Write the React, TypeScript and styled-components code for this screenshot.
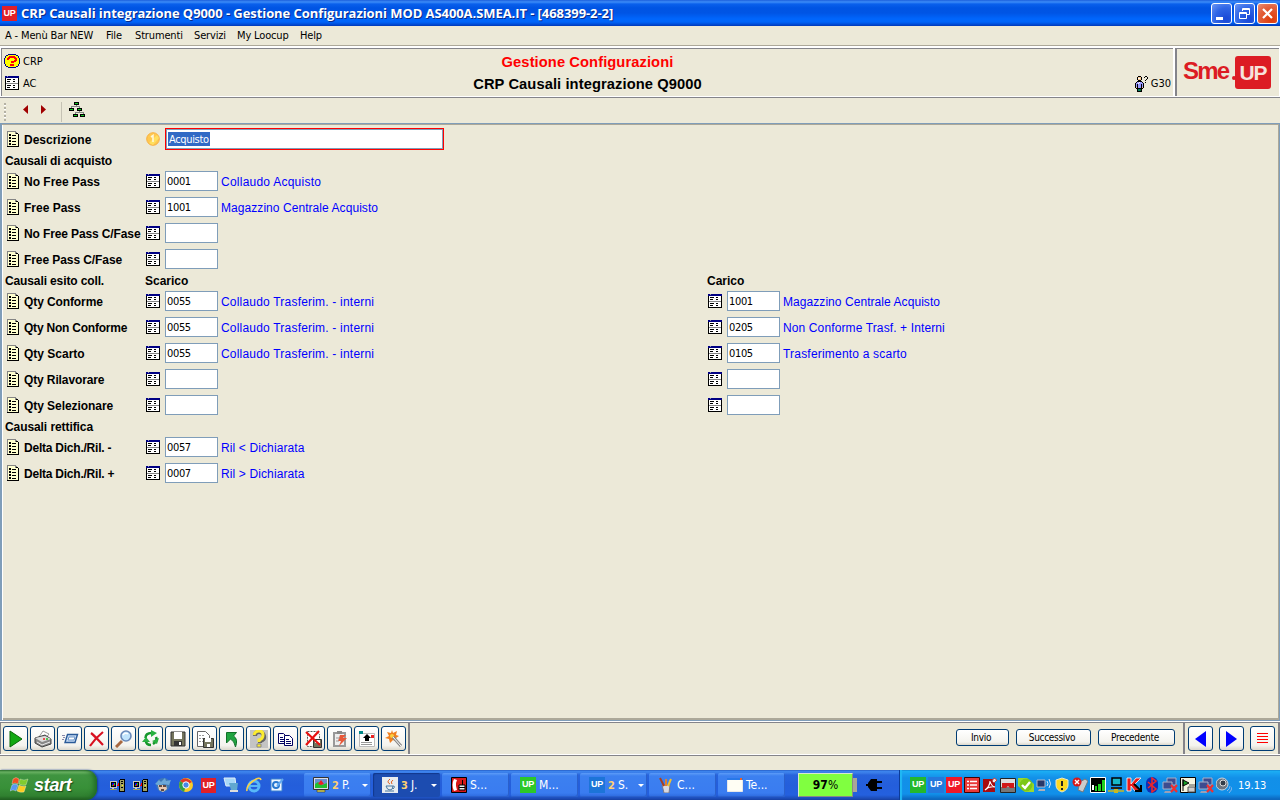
import React from "react";
import styled, { createGlobalStyle, css } from "styled-components";

const ui = `"DejaVu Sans Condensed", "DejaVu Sans", sans-serif`;
const arial = `"Liberation Sans", Arial, sans-serif`;

const Global = createGlobalStyle`
  * { box-sizing: border-box; }
  body { margin: 0; background: #ece9d8; overflow: hidden; }
  svg { display: block; flex: none; }
`;

const Screen = styled.div`
  width: 1280px;
  height: 800px;
  display: flex;
  flex-direction: column;
  background: #ece9d8;
  color: #000;
  font-family: ${ui};
  font-size: 11px;
  white-space: pre;
  cursor: default;
`;

/* ---------- Title bar ---------- */
const TitleBar = styled.header`
  height: 26px;
  flex: none;
  display: flex;
  align-items: center;
  padding: 0 2px;
  background: linear-gradient(#1c5fdc 0, #3c8cf8 2px, #0a60ec 4px, #0054e3 8px, #0055e5 13px, #0066fd 19px, #0064f8 22px, #0050dc 24px, #0038b8 26px);
`;
const WindowTitle = styled.h1`
  flex: 1;
  margin: 0 0 0 4px;
  color: #fff;
  font: bold 13px/26px "Open Sans", sans-serif;
  letter-spacing: -0.07px;
  text-shadow: 1px 1px 0 #0a2a88;
`;
const Caption = styled.span<{ $close?: boolean }>`
  width: 21px;
  height: 21px;
  margin-left: 2px;
  border: 1px solid #fff;
  border-radius: 3px;
  background: ${(p) =>
    p.$close
      ? "radial-gradient(circle at 70% 80%, #e04010 10%, #e2603c 60%, #e89078)"
      : "radial-gradient(circle at 75% 80%, #1c4cd8 10%, #2f66e6 55%, #6e98f4)"};
`;

/* ---------- Menu ---------- */
const MenuBar = styled.nav`
  height: 20px;
  flex: none;
  display: flex;
  border-bottom: 1px solid #aca899;
  line-height: 20px;
`;
const MenuItem = styled.span<{ $w: number }>`
  width: ${(p) => p.$w}px;
  padding-left: 5px;
  letter-spacing: -0.15px;
`;

/* ---------- Header ---------- */
const HeaderRow = styled.section`
  height: 52px;
  flex: none;
  display: flex;
  padding-top: 1px;
  border-bottom: 1px solid #84848a;
  background: #fff;
`;
const InfoPanel = styled.div`
  width: 1172px;
  display: flex;
  margin: 1px 0 1px 1px;
  border: solid #84848a;
  border-width: 1px 0 0 1px;
  background: #ece9d8;
`;
const Codes = styled.div`
  flex: 0 0 200px;
  padding: 1px 0 0 2px;
`;
const Code = styled.div`
  display: flex;
  align-items: center;
  height: 22px;
`;
const CodeIcon = styled.span`
  width: 19px;
  display: flex;
  padding-right: 3px;
  justify-content: center;
`;
const Titles = styled.div`
  flex: 1;
  padding: 2px 0 0 0;
  text-align: center;
  font: bold 14.7px/22px ${arial};
`;
const TitleLine = styled.div<{ $red?: boolean }>`
  color: ${(p) => (p.$red ? "#f00" : "#000")};
  letter-spacing: 0.09px;
`;
const UserBox = styled.div`
  flex: 0 0 200px;
  display: flex;
  justify-content: flex-end;
  align-items: center;
  gap: 3px;
  padding: 22px 2px 0 0;
`;
const LogoPanel = styled.div`
  flex: 1;
  margin: 1px 1px 1px 3px;
  box-shadow: -1px 0 0 #84848a;
  border: solid #84848a;
  border-width: 1px 0 0 1px;
  background: #ece9d8;
  display: flex;
  align-items: center;
  padding-left: 6px;
`;
const LogoText = styled.span`
  font: bold 24px/28px ${arial};
  letter-spacing: -1.8px;
  color: #dc1c24;
  margin-top: -3px;
  width: 49px;
`;
const LogoDot = styled.span`
  width: 4px;
  height: 4px;
  margin: 11px 0 0 0;
  border-radius: 50%;
  background: #dc1c24;
`;
const LogoBox = styled.span`
  width: 36px;
  height: 33px;
  margin: -1px 0 0 -1px;
  border-radius: 3px;
  background: #dc1c24;
  color: #f6e2dc;
  text-align: center;
  font: bold 21px/33px ${arial};
  letter-spacing: -1px;
`;

/* ---------- Navigation strip ---------- */
const NavStrip = styled.div`
  height: 25px;
  flex: none;
  display: flex;
  align-items: center;
`;
const Grip = styled.span`
  width: 2px;
  height: 18px;
  margin: 3px 17px 0 4px;
  background: repeating-linear-gradient(#b4b1a4 0 2px, #fff 2px 3px, transparent 3px 4px);
`;
const Arrows = styled.span`
  margin-top: -2px;
`;
const Divider = styled.span`
  width: 1px;
  height: 20px;
  margin: 2px 7px 0 14px;
  background: #c5c2b4;
`;
const TreeIcon = styled.span`
  margin-top: -2px;
`;

/* ---------- Form ---------- */
const Form = styled.main`
  height: 598px;
  flex: none;
  border: solid #7f9db9;
  border-width: 1px 1px 1px 2px;
  box-shadow: inset 0 1px 0 #aca899, inset 1px 0 0 #fff, inset -1px -2px 0 #aca899;
  padding: 2px 0 0 3px;
`;
const Row = styled.div`
  height: 26px;
  display: flex;
  align-items: center;
`;
const HeadingRow = styled(Row)`
  height: 16px;
`;
const Label = styled.label<{ $w: number; $ls?: number }>`
  width: ${(p) => p.$w}px;
  padding-top: 2px;
  font: bold 12px/16px ${arial};
  letter-spacing: ${(p) => p.$ls ?? 0}px;
  flex: none;
`;
const LabelCell = styled.div`
  width: 141px;
  padding-left: 2px;
  display: flex;
  align-items: center;
  gap: 5px;
  flex: none;
`;
const FieldCell = styled.div`
  width: 562px;
  flex: none;
  display: flex;
  align-items: center;
`;
const Input = styled.div<{ $wide?: boolean }>`
  width: 53px;
  height: 20px;
  margin-left: 5px;
  padding-left: 1px;
  border: 1px solid #7f9db9;
  background: #fff;
  line-height: 20px;
  letter-spacing: -0.35px;
  ${(p) =>
    p.$wide &&
    css`
      width: 279px;
      height: 22px;
      padding-left: 2px;
      border-color: #f00;
      box-shadow: inset -1px -1px 0 #7f9db9, inset 1px 1px 0 #7f9db9;
    `}
`;
const Selection = styled.span`
  display: inline-block;
  height: 14px;
  margin-top: 3px;
  padding-left: 1px;
  line-height: 15px;
  width: 42px;
  background: #316ac5;
  color: #fff;
  vertical-align: top;
`;
const Description = styled.span<{ $ls: number }>`
  margin-left: 3px;
  padding-top: 2px;
  color: #00f;
  font: 12px/16px ${arial};
  letter-spacing: ${(p) => p.$ls}px;
`;

/* ---------- Bottom tool bar ---------- */
const ToolRow = styled.footer`
  height: 35px;
  flex: none;
  display: flex;
  margin-bottom: 14px;
  background: #fff;
  border-bottom: 1px solid #84848a;
  padding: 1px 0 1px;
`;
const ToolPanel = styled.div<{ $w: number; $gap: number; $pad: number }>`
  width: ${(p) => p.$w}px;
  display: flex;
  align-items: center;
  justify-content: flex-end;
  gap: ${(p) => p.$gap}px;
  padding-right: ${(p) => p.$pad}px;
  border: solid #84848a;
  border-width: 1px 0 0 1px;
  margin-right: 1px;
  box-shadow: 2px 0 0 #84848a;
  background: #ece9d8;
`;
const ToolButton = styled.button`
  width: 25px;
  height: 25px;
  flex: none;
  padding: 0;
  border: 1px solid #003c74;
  border-radius: 3px;
  background: linear-gradient(#fff, #f4f3ee 80%, #dcd8cc);
  display: flex;
  align-items: center;
  justify-content: center;
`;
const TextButton = styled(ToolButton)<{ $w: number }>`
  width: ${(p) => p.$w}px;
  height: 17px;
  margin-bottom: 2px;
  padding-right: 3px;
  font: 10px/15px ${ui};
  letter-spacing: -0.3px;
`;

/* ---------- Task bar ---------- */
const TaskBar = styled.div`
  height: 30px;
  flex: none;
  display: flex;
  background: linear-gradient(#1f50b8 0, #3d86ee 1px, #3a7ce8 3px, #2763dc 5px, #245edb 15px, #2460de 25px, #1b48b0 29px, #163ea0);
  color: #fff;
`;
const Start = styled.div`
  width: 97px;
  display: flex;
  align-items: center;
  padding: 0 0 0 10px;
  gap: 5px;
  border-radius: 0 11px 11px 0;
  background: linear-gradient(#2c7030 0, #6cb464 2px, #3f9440 5px, #389038 18px, #308030 26px, #205c20);
  box-shadow: inset -5px 0 5px -2px #1f6a24, 1px 0 2px #173e98;
  font: italic bold 18px/28px ${arial};
  letter-spacing: -0.3px;
  text-shadow: 1px 1px 1px #184a18;
`;
const Launch = styled.div`
  width: 207px;
  padding-left: 12px;
  display: flex;
  align-items: center;
  gap: 7px;
`;
const Tasks = styled.div`
  width: 494px;
  display: flex;
  align-items: center;
  gap: 2px;
`;
const Task = styled.div<{ $active?: boolean }>`
  width: 67px;
  height: 24px;
  display: flex;
  align-items: center;
  padding: 0 3px 0 9px;
  border-radius: 2px;
  background: ${(p) => (p.$active ? "#1c4cb0" : "linear-gradient(#5c9cf8 0, #3c80f0 3px, #3a7cf0 20px, #2c68dc)")};
  box-shadow: ${(p) => (p.$active ? "inset 1px 1px 1px #12388c" : "inset -1px -1px 0 #2a60cc")};
`;
const TaskText = styled.span`
  margin-left: 3px;
  flex: 1;
  font-size: 12px;
  b { color: #ffd070; margin-right: 3px; font-size: 11px; }
`;
const Drop = styled.i`
  border: solid transparent;
  border-width: 3px 3px 0;
  border-top-color: #fff;
`;
const Battery = styled.div`
  width: 55px;
  height: 24px;
  margin: 3px 0 0;
  background: #80ff40;
  border: 1px solid #d8e8d0;
  border-right-color: #888;
  border-bottom-color: #888;
  color: #000;
  text-align: center;
  font: 12px/22px ${ui};
`;
const BatteryCap = styled.div`
  width: 4px;
  height: 14px;
  margin: 8px 9px 0 0;
  background: #aaa698;
`;
const Plug = styled.div`
  display: flex;
  align-items: center;
`;
const Tray = styled.div`
  margin-left: auto;
  width: 381px;
  border-left: 1px solid #0c3c98;
  box-shadow: inset 2px 0 1px #20b8f4;
  padding-left: 10px;
  display: flex;
  align-items: center;
  gap: 2px;
  background: linear-gradient(#0c70c4 0, #1cb0f4 1px, #18a0f0 4px, #1290e8 8px, #1190ea 24px, #0c68c0 29px, #0c58b0);
`;
const Clock = styled.span`
  margin-left: 4px;
  font-size: 11px;
`;
const UpBadge = styled.span<{ $c: string; $s?: number }>`
  width: ${(p) => p.$s ?? 16}px;
  height: ${(p) => p.$s ?? 16}px;
  flex: none;
  background: ${(p) => p.$c};
  color: #fff;
  text-align: center;
  font: bold 9px/14px ${arial};
  letter-spacing: -0.3px;
`;

/* ---------- Pixel drawings ---------- */
const palette: Record<string, string> = {
  k: "#000", g: "#848484", w: "#fff", y: "#ffffce", n: "#000084", b: "#00f", Y: "#ff0", r: "#f00",
  G: "#10c820", p: "#f8c890", l: "#9c9cff", t: "#008060", s: "#c6c6c6", m: "#8890a8", e: "#006c30", a: "#a0a060",
};
const Pixels = ({ rows }: { rows: string[] }) => (
  <svg width={rows[0].length} height={rows.length} shapeRendering="crispEdges">
    {rows.flatMap((r, y) =>
      [...r].map((ch, x) => (ch === "." ? null : <rect key={`${x}-${y}`} x={x} y={y} width="1" height="1" fill={palette[ch]} />))
    )}
  </svg>
);
const listRows = [
  "ggggggggg...", "gyyyyyyygg..", "gyyyyyyygkk.", "gykkyyyyyyyk", "gykkykkkkyyk", "gyyyyyyyyyyk", "gykkyyyyyyyk", "gykkykkkkyyk",
  "gyyyyyyyyyyk", "gykkyyyyyyyk", "gykkykkkkyyk", "gyyyyyyyyyyk", "gykkyyyyyyyk", "gykkykkkkyyk", "gyyyyyyyyyyk", "kkkkkkkkkkkk",
];
const tableRows = [
  "nnmnnnnnnnnnnn", "nnnnnnnnnnnnnn", "kwwwwwwwwwwwwk", "kwkkkkwwkkwwwk", "kwwwwwwwwwwwwk", "kwkkkwwwkkwwwk", "kwwwwwwwwwwwwk",
  "kggggggggggggk", "kwwwwwwwwwwwwk", "kwkkkkwwkkwwwk", "kwwwwwwwwwwwwk", "kwkkkwwwkkwwwk", "kwwwwwwwwwwwwk", "kkkkkkkkkkkkkk",
];
const questionRows = [
  "....nnnnnnnn....", "..nnYYYYYYYYnn..", ".nYYYrrrrrrYYYn.", ".nYYrrrrrrrrYYn.", "nYYrrrYYYYrrrYYn", "nYYrrYYYYYYrrYYn", "nYYYYYYYYYrrrYYn",
  "nYYYYYYrrrrrYYYn", "nYYYYYYrrrYYYYYn", "nYYYYYYYYYYYYYYn", ".nYYYYrrrrYYYYn.", ".nYYYYrrrrYYYYn.", "..nnYYYYYYYYnn..", "....nnnnnnnn....",
];
const personRows = [
  "...kkk....kk.", "..kpppk..k..k", "..kwwpk.....k", "..kpppk....k.", "...kkk....k..", "..kkkkk......", ".kllwllk..k..", "kllwllllk....",
  "klklllklk....", "klklllklk....", "klklllklk....", "kpklllkpk....", ".kkkkkkk.....", "..kttek......", "..kttek......", "..kkkkk......",
];
const treeRows = [
  ".....kkkkk......", ".....kGGGk......", ".....kkkkk......", ".......g........", "..ggggggggg.....", "..g.......g.....", "kkkkk...kkkkk...", "kGGGk...kGGGk...",
  "kkkkk...kkkkk...", "..........g.....", "......ggggggggg.", "......g.......g.", "....kkkkk..kkkkk", "....kGGGk..kGGGk", "....kkkkk..kkkkk",
];
const netRows = [
  "...........kkkkk", "..........kaaaak", ".sssssss..kakkak", ".skkkkks..kaaaak", ".skbbGks.rkakkak", ".skbrGks.rkaaaak", ".skGrbksrrkaaYak", ".skkkkks..kaaaak",
  ".sssssss..kakkak", "...ss.....kaaaak", ".aaaaaaa..kaaaak", "..........kaaaak", "..........kkkkkk",
];

const copyPage = "M1.500 3.500h5l3 3v7h-8zM3 7.500h3M3 9.500h5M3 11.500h5";
const Tool = ({ n }: { n: number }) => {
  const icons = [
    <path d="M3 1l12 8-12 8z" fill="#12a812" stroke="#066806" />,
    <g><path d="M5 7l4-6 6 3-4 5z" fill="#fff" stroke="#999" /><path d="M1 8l10-3 6 4v5l-9 3-7-4z" fill="#888" stroke="#444" /><path d="M1 8l7 4 9-3-6-3z" fill="#ddd" /><path d="M3 12l5 3 8-3" stroke="#eee" fill="none" /><circle cx="10" cy="9" r="1" fill="#e22" /><circle cx="13" cy="9" r="1" fill="#2b2" /></g>,
    <g><path d="M6.500 4.500h10l-2.500 8h-10z" fill="#c8dcf4" stroke="#2a5a98" strokeWidth="1.4" /><path d="M8 7h6l-1 3H7z" fill="#fff" stroke="#6b94c8" /><path d="M1 5.500h3M2 7.500h2M1 9.500h2" stroke="#88a" /></g>,
    <path d="M3 3C7 6 11 11 15 15M15 2C10 6 6 10 2 16" fill="none" stroke="#d81020" strokeWidth="2.2" />,
    <g><path d="M7 11l-6 6" stroke="#a86840" strokeWidth="3" /><circle cx="11" cy="6" r="5" fill="#c0e4fc" stroke="#6888b8" strokeWidth="1.6" /><path d="M8 5q2-3 5-1" fill="none" stroke="#fff" strokeWidth="1.5" /></g>,
    <g fill="none" stroke="#16962c" strokeWidth="2.600"><path d="M3.500 8q0-5 6-5" /><path d="M14 7q2 4-3 7" /><path d="M9 15q-5 0-5-4" /><path d="M9 0l6 3-6 4zM17 8l-2 6-5-3zM0 12l4-5 4 5z" fill="#28b040" stroke="none" /></g>,
    <g><path d="M2 2h14v14H2z" fill="#74745c" stroke="#333" /><path d="M5 2h8v7H5z" fill="#fff" /><path d="M5 11h8v5H5z" fill="#333" /><path d="M10 12h2v3h-2z" fill="#fff" /></g>,
    <g><path d="M1.500 1.500h8l4 4v11h-12z" fill="#fff" stroke="#666" /><path d="M3 5.500h5M3 8.500h5M3 11.500h5" stroke="#999" strokeDasharray="2 1" /><path d="M7.500 8.500h10v9h-10z" fill="#74745c" stroke="#333" /><path d="M9 8h6v4H9zM11 14h3v3h-3z" fill="#fff" /></g>,
    <path d="M3.500 2.500h10l-3 3.500q5 3 2 11-1-6-5-8l-4 4z" fill="#20a440" stroke="#107028" />,
    <g><path d="M0 0h18v18H0z" fill="#c4c4c4" /><path d="M5 6q0-4 4-4t5 4-4 5v2" fill="none" stroke="#666" strokeWidth="4" /><path d="M4 5q1-4 5-4t4 4-4 5v2" fill="none" stroke="#fcec30" strokeWidth="3" /><path d="M7 14h4v3H7z" fill="#fcec30" stroke="#888" /></g>,
    <g fill="#fff" stroke="#000060"><path d={copyPage} /><path d={copyPage} transform="translate(6 2)" /></g>,
    <g><path d="M3.500 1.500h9l3 3v12h-12z" fill="#fff" stroke="#555" strokeDasharray="2 1" /><path d="M9.500 9.500h8v8h-8z" fill="#74745c" stroke="#333" /><path d="M11 10h5v3h-5z" fill="#fff" /><path d="M2 2l14 13M15 1L2 15" stroke="#e81010" strokeWidth="2.2" /></g>,
    <g><path d="M3 3h11v13H3z" fill="#eee" stroke="#999" strokeWidth="2" /><path d="M6 1h5v3H6z" fill="#888" /><path d="M9 5h6l-3 3h4l-8 8 2-5H7z" fill="#e85838" /><path d="M5 8h4M5 11h3" stroke="#999" /></g>,
    <g><path d="M1.500 3.500h15v13h-15z" fill="#fff" stroke="#bbb" /><path d="M1 1h4v3H1z" fill="#088" /><path d="M13 5h3v3h-3z" fill="#e22" /><path d="M5 8l4-4 4 4h-2v3H7V8z" fill="#000" /><path d="M3 12.500h11M3 14.500h11" stroke="#999" /></g>,
    <g><path d="M7 0l1 3 4-2-1 4 3 1-3 2 1 4-4-2-3 3-1-4-4-1 4-2-2-4 4 1z" fill="#f08020" /><circle cx="7" cy="6" r="2" fill="#fcd040" /><path d="M8 7l8 9" stroke="#888" strokeWidth="3" /><path d="M8 7l8 9" stroke="#fff" /></g>,
  ];
  return <svg width="18" height="18" viewBox="0 0 18 18">{icons[n]}</svg>;
};

const Sv = ({ children }: { children: React.ReactNode }) => (
  <svg width="16" height="16" viewBox="0 0 16 16">{children}</svg>
);
const Monitor = ({ x = 0, y = 0 }) => (
  <g transform={`translate(${x} ${y})`}><path d="M0 0h9v7H0z" fill="#3c4c90" stroke="#a8b0c8" /><path d="M2 9h6v2H1z" fill="#98a0b8" /></g>
);
const NetworkOff = () => (
  <Sv><Monitor x={5} y={1} /><Monitor x={1} y={5} /><path d="M9 8l6 7M15 8l-6 7" stroke="#f03030" strokeWidth="2.2" /></Sv>
);

const TrayIcons = () => (
  <>
    <UpBadge $c="#24b82c">UP</UpBadge>
    <UpBadge $c="#2478dc">UP</UpBadge>
    <UpBadge $c="#f01828">UP</UpBadge>
    <Sv><path d="M.5.5h15v15H.5z" fill="#e83838" stroke="#400" /><path d="M3 4.500h2M6 4.500h7M3 8h2M6 8h7M3 11.500h2M6 11.500h7" stroke="#fff" strokeWidth="1.600" /></Sv>
    <Sv><path d="M1 2h12v13H1z" fill="#a80c10" /><path d="M3 13q5-4 5-9 1 5 5 6-6-1-10 3" fill="none" stroke="#fff" strokeWidth="1.1" /><path d="M10 4l2-3 3 2-3 3z" fill="#eee" stroke="#b44" /></Sv>
    <Sv><path d="M.5 1.500h15v14H.5z" fill="#ddd" stroke="#222" /><path d="M1 10h14v5H1z" fill="#777" /><path d="M2 6h12v5h-4L8 9l-2 2H2z" fill="#d01818" /></Sv>
    <Sv><path d="M0 1h9l7 6v8H7L0 9z" fill="#9ad830" /><circle cx="8" cy="8" r="6.5" fill="#7cc818" /><path d="M4 8l3 3 5-6" fill="none" stroke="#fff" strokeWidth="2.4" /></Sv>
    <Sv><path d="M1 3h8v7H1z" fill="#283868" stroke="#b0b8cc" /><path d="M3 12h6v2H2z" fill="#b0b0b8" /><path d="M11 4q2 3 0 5M13 2q3 5 0 9" fill="none" stroke="#d8e8f8" /></Sv>
    <Sv><path d="M8 1l6 2v5q0 5-6 7-6-2-6-7V3z" fill="#fcd820" stroke="#e8e8c8" /><path d="M8 4v5M8 11v2" stroke="#222" strokeWidth="2" /></Sv>
    <Sv><path d="M8 5l5-3 3 2-5 11-5-2z" fill="#ccc" stroke="#777" /><circle cx="5" cy="5" r="4.5" fill="#d81818" /><path d="M3 3l4 4M7 3L3 7" stroke="#fff" strokeWidth="1.4" /></Sv>
    <Sv><path d="M.5.5h15v15H.5z" fill="#000" stroke="#fff" /><path d="M2 8h2v5H2z" fill="#fff" /><path d="M5 9h2v5H5zM8 7h3v7H8zM12 3h3v11h-3z" fill="#20d020" /></Sv>
    <Sv><path d="M4 1h9v7H4z" fill="#18b8c8" stroke="#000" strokeWidth="1.5" /><path d="M3 10h11v2H3z" fill="#222" /><path d="M0 14h16" stroke="#c8b820" strokeWidth="1.5" /><path d="M6 12h4v4H6z" fill="#c8b820" /></Sv>
    <Sv><path d="M1 1h4v6l5-6h5L8 8l6 6H9L5 9v5H1z" fill="#e81c1c" stroke="#fff" strokeWidth=".8" /><path d="M8 7l6 6m1-5v6H9" stroke="#000" strokeWidth="2" fill="none" /></Sv>
    <Sv><rect x="2" y="0" width="12" height="16" rx="6" fill="#0c30b8" /><path d="M4 5l8 7-4 3V1l4 3-8 7" fill="none" stroke="#f02828" strokeWidth="1.5" /></Sv>
    <NetworkOff />
    <Sv><path d="M.5.5h15v15H.5z" fill="#f4f4e0" stroke="#000" /><path d="M3 2v12M3 3l6 3-6 3z" fill="#18a028" stroke="#000" /><path d="M9 8h6M8 10h7v5H8z" stroke="#555" fill="#ccc" /></Sv>
    <NetworkOff />
    <Sv><circle cx="6" cy="7" r="6" fill="#6c7480" stroke="#ccd4dc" /><circle cx="7" cy="6" r="3" fill="#333c48" stroke="#ddd" /><path d="M11 14q3-2 3-5M13 16q3-3 3-6" stroke="#88b4e8" fill="none" /></Sv>
  </>
);

/* Text and its letter spacing */
type Text = [string, number];
const Field = ({ value, text }: { value?: string; text?: Text }) => (
  <FieldCell>
    <Pixels rows={tableRows} />
    <Input>{value}</Input>
    {text && <Description $ls={text[1]}>{text[0]}</Description>}
  </FieldCell>
);
type Cell = { value?: string; text?: Text };
type Item = { label: string; ls?: number; heads?: string[]; heading?: boolean; a?: Cell; b?: Cell };
const store: Text = ["Magazzino Centrale Acquisto", 0.06];
const transfer: Text = ["Collaudo Trasferim. - interni", 0.2];
const items: Item[] = [
  { heading: true, label: "Causali di acquisto", ls: -0.12 },
  { label: "No Free Pass", a: { value: "0001", text: ["Collaudo Acquisto", 0.24] } },
  { label: "Free Pass", a: { value: "1001", text: store } },
  { label: "No Free Pass C/Fase", ls: -0.12, a: {} },
  { label: "Free Pass C/Fase", ls: -0.08, a: {} },
  { heading: true, label: "Causali esito coll.", ls: -0.12, heads: ["Scarico", "Carico"] },
  { label: "Qty Conforme", ls: -0.1, a: { value: "0055", text: transfer }, b: { value: "1001", text: store } },
  { label: "Qty Non Conforme", ls: -0.22, a: { value: "0055", text: transfer }, b: { value: "0205", text: ["Non Conforme Trasf. + Interni", 0.12] } },
  { label: "Qty Scarto", a: { value: "0055", text: transfer }, b: { value: "0105", text: ["Trasferimento a scarto", 0.2] } },
  { label: "Qty Rilavorare", ls: -0.12, a: {}, b: {} },
  { label: "Qty Selezionare", ls: -0.06, a: {}, b: {} },
  { heading: true, label: "Causali rettifica", ls: -0.08 },
  { label: "Delta Dich./Ril. -", ls: -0.23, a: { value: "0057", text: ["Ril < Dichiarata", 0.12] } },
  { label: "Delta Dich./Ril. +", ls: -0.23, a: { value: "0007", text: ["Ril > Dichiarata", 0.12] } },
];
const menu: [string, number][] = [["A - Menù Bar NEW", 101], ["File", 29], ["Strumenti", 59], ["Servizi", 43], ["My Loocup", 63], ["Help", 40]];

export default function App() {
  return (
    <Screen>
      <Global />
      <TitleBar>
        <UpBadge $c="#e02028" $s={15}>UP</UpBadge>
        <WindowTitle>CRP Causali integrazione Q9000 - Gestione Configurazioni MOD AS400A.SMEA.IT - [468399-2-2]</WindowTitle>
        <Caption><svg width="19" height="19"><path d="M4 13h7v3H4z" fill="#fff" /></svg></Caption>
        <Caption><svg width="19" height="19" fill="none" stroke="#fff"><path d="M4.5 8.5h7v6h-7zM4 9.5h8M7.5 7V4.5h7v6H12M7 5.500h8" /></svg></Caption>
        <Caption $close><svg width="19" height="19"><path d="M5 5l9 9M14 5l-9 9" stroke="#fff" strokeWidth="2.2" /></svg></Caption>
      </TitleBar>
      <MenuBar>{menu.map(([m, w]) => <MenuItem key={m} $w={w}>{m}</MenuItem>)}</MenuBar>
      <HeaderRow>
        <InfoPanel>
          <Codes>
            <Code><CodeIcon><Pixels rows={questionRows} /></CodeIcon>CRP</Code>
            <Code><CodeIcon><Pixels rows={tableRows} /></CodeIcon>AC</Code>
          </Codes>
          <Titles>
            <TitleLine $red>Gestione Configurazioni</TitleLine>
            <TitleLine>CRP Causali integrazione Q9000</TitleLine>
          </Titles>
          <UserBox><Pixels rows={personRows} />G30</UserBox>
        </InfoPanel>
        <LogoPanel><LogoText>Sme</LogoText><LogoDot /><LogoBox>UP</LogoBox></LogoPanel>
      </HeaderRow>
      <NavStrip>
        <Grip />
        <Arrows><svg width="24" height="11"><path d="M5 1v9L0 5.500z" fill="#a00000" /><path d="M18 1v9l5-4.500z" fill="#a00000" /></svg></Arrows>
        <Divider />
        <TreeIcon><Pixels rows={treeRows} /></TreeIcon>
      </NavStrip>
      <Form>
        <Row>
          <LabelCell><Pixels rows={listRows} /><Label $w={117}>Descrizione</Label></LabelCell>
          <FieldCell>
            <svg width="14" height="14"><circle cx="7" cy="7" r="6.3" fill="#ffc850" stroke="#f8b040" /><path d="M3 11L11 3l2 3-6 7z" fill="#ffe060" /><path d="M5 5l2-1.500V10" fill="none" stroke="#fff8d8" strokeWidth="1.600" /></svg>
            <Input $wide><Selection>Acquisto</Selection></Input>
          </FieldCell>
        </Row>
        {items.map((it) =>
          it.heading ? (
            <HeadingRow key={it.label}>
              <Label $w={140} $ls={it.ls}>{it.label}</Label>
              {it.heads?.map((h) => <Label key={h} $w={562}>{h}</Label>)}
            </HeadingRow>
          ) : (
            <Row key={it.label}>
              <LabelCell><Pixels rows={listRows} /><Label $w={117} $ls={it.ls}>{it.label}</Label></LabelCell>
              {it.a && <Field {...it.a} />}
              {it.b && <Field {...it.b} />}
            </Row>
          )
        )}
      </Form>
      <ToolRow>
        <ToolPanel $w={408} $gap={2} $pad={2}>{Array.from({ length: 15 }, (_, i) => <ToolButton key={i}><Tool n={i} /></ToolButton>)}</ToolPanel>
        <ToolPanel $w={774} $gap={7} $pad={8}>
          <TextButton $w={53}>Invio</TextButton>
          <TextButton $w={75}>Successivo</TextButton>
          <TextButton $w={77}>Precedente</TextButton>
        </ToolPanel>
        <ToolPanel $w={94} $gap={6} $pad={3}>
          <ToolButton><svg width="13" height="18"><path d="M12 1v16L1 9z" fill="#00f" /></svg></ToolButton>
          <ToolButton><svg width="13" height="18"><path d="M1 1v16l11-8z" fill="#00f" /></svg></ToolButton>
          <ToolButton><svg width="11" height="11"><path d="M0 .5h11M0 3.500h11M0 6.500h11M0 9.500h11" stroke="#f00" /></svg></ToolButton>
        </ToolPanel>
      </ToolRow>
      <TaskBar>
        <Start>
          <svg width="19" height="18"><g stroke="#fff" strokeWidth=".3"><path d="M3 3q3-3 6 0L8 8Q5 6 2 8z" fill="#f05020" /><path d="M10 3q4 2 8 0l-2 6q-4 1-7-1z" fill="#80cc30" /><path d="M2 9q3-2 6 0l-2 6q-3-2-6 0z" fill="#5898f0" /><path d="M9 9q3 2 7 1l-2 6q-4 1-7-1z" fill="#fccc20" /></g></svg>
          start
        </Start>
        <Launch>
          <Pixels rows={netRows} />
          <Pixels rows={netRows} />
          <Sv><path d="M1 7q2-7 9-6 6 2 5 8-2 6-8 6-5 0-6-8z" fill="#3c78b8" /><path d="M0 7l4-4 2 2 4-4 1 3 5-1-2 5-6-1-3 2z" fill="#6ca8d8" /><path d="M3 8h8l1 4-4 3-4-2z" fill="#e8c8b0" /><path d="M4 9h3M8 9h3M6 13h3" stroke="#302020" strokeWidth="1.300" /></Sv>
          <Sv><circle cx="8" cy="8" r="7" fill="#f8cc28" /><path d="M8 8L2 4q5-6 12 1l-6 3z" fill="#e03828" /><path d="M8 8l-2 7Q-1 11 2 4z" fill="#30a048" /><circle cx="8" cy="8" r="3.200" fill="#4888e8" stroke="#fff" /></Sv>
          <UpBadge $c="#e02028" $s={15}>UP</UpBadge>
          <Sv><path d="M1 1h11l1 8H3z" fill="#a8d8f8" stroke="#e0eef8" /><path d="M6 6h9l-1 7H8z" fill="#60a8d0" /><path d="M7 14h8" stroke="#ddd" strokeWidth="2" /></Sv>
          <Sv><circle cx="8" cy="9" r="5" fill="none" stroke="#58b8f8" strokeWidth="3" /><path d="M4 9h9" stroke="#58b8f8" strokeWidth="2" /><path d="M1 14Q0 9 7 4t8-1" fill="none" stroke="#f8d048" strokeWidth="1.600" /></Sv>
          <Sv><path d="M2 2h11v12H2z" fill="#eef6ff" stroke="#3880d0" /><circle cx="7" cy="8" r="3" fill="none" stroke="#2878d0" strokeWidth="2" /><path d="M8 9l6-7" stroke="#60a8f0" strokeWidth="2" /></Sv>
        </Launch>
        <Tasks>
          <Task><Sv><path d="M.5.5h15v12H.5z" fill="#dddde4" stroke="#333" /><path d="M2 2h12v9H2z" fill="#6890d0" /><path d="M2 11V7l3-2 4 3 5-2v5z" fill="#20c030" /><path d="M5 7l3-4 3 4-3 1z" fill="#f02020" /><path d="M4 13h8v2H4z" fill="#e8e050" stroke="#333" strokeWidth=".6" /></Sv><TaskText><b>2</b>P.</TaskText><Drop /></Task>
          <Task $active><Sv><path d="M0 0h16v16H0z" fill="#e8ecf0" /><path d="M8 2q-4 3 0 5M11 3q-3 2-1 4" stroke="#e06020" fill="none" /><path d="M4 9h7q0 4-3 4t-4-4zM3 14h9M11 9q3 0 0 3" stroke="#4878a0" fill="none" /></Sv><TaskText><b>3</b>J.</TaskText><Drop /></Task>
          <Task><Sv><path d="M.5.5h15v15H.5z" fill="#d81818" stroke="#000" /><path d="M3 2q-3 6 0 12l3-1-1-4V6l1-3z" fill="#fff" /><path d="M8 8h6v5H8zM11.500 3v5M8 10.500h6" stroke="#000" fill="#eee" /></Sv><TaskText>S...</TaskText></Task>
          <Task><UpBadge $c="#2cc828">UP</UpBadge><TaskText>M...</TaskText></Task>
          <Task><UpBadge $c="#1c74d8">UP</UpBadge><TaskText><b>2</b>S.</TaskText><Drop /></Task>
          <Task><Sv><path d="M4 8h8l-1 8H6z" fill="#d8d8e0" stroke="#778" /><path d="M6 9L2 1" stroke="#a84020" strokeWidth="2" /><path d="M8 9V2" stroke="#e08030" strokeWidth="2" /><path d="M10 9l3-7" stroke="#f0c030" strokeWidth="2" /></Sv><TaskText>C...</TaskText></Task>
          <Task><Sv><path d="M.5 2.500h15v12H.5z" fill="#fffef4" stroke="#e8e8e8" /><path d="M0 1h16v2H0z" fill="#2878e8" /><path d="M13 1h2v2h-2z" fill="#f06020" /></Sv><TaskText>Te...</TaskText></Task>
        </Tasks>
        <Battery><b>97</b>%</Battery>
        <BatteryCap />
        <Plug><Sv><path d="M0 8h4M10 5h6M10 11h6" stroke="#000" strokeWidth="2" /><path d="M2 6l3-4h6v12H5l-3-4z" fill="#000" /></Sv></Plug>
        <Tray><TrayIcons /><Clock>19.13</Clock></Tray>
      </TaskBar>
    </Screen>
  );
}
